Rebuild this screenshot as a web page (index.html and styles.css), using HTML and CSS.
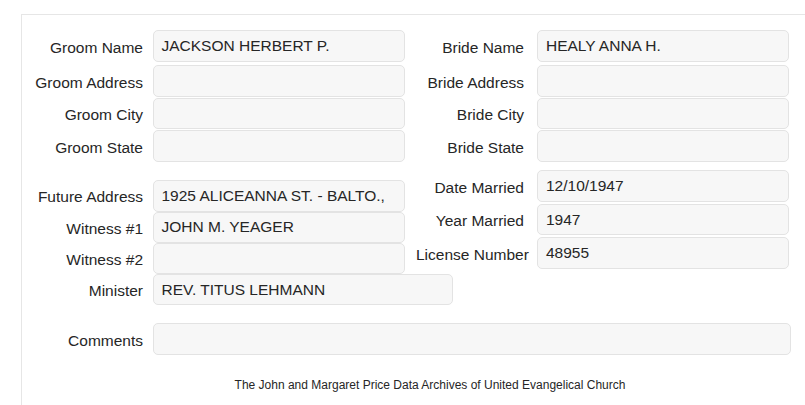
FILE: index.html
```html
<!DOCTYPE html>
<html>
<head>
<meta charset="utf-8">
<link rel="stylesheet" href="styles.css">
</head>
<body>
<div class="panel">
  <div class="section one">
    <div class="col left">
      <div class="field first"><div class="label">Groom Name</div><div class="box">JACKSON HERBERT P.</div></div>
      <div class="field"><div class="label">Groom Address</div><div class="box"></div></div>
      <div class="field"><div class="label">Groom City</div><div class="box"></div></div>
      <div class="field"><div class="label">Groom State</div><div class="box"></div></div>
    </div>
    <div class="col right">
      <div class="field first"><div class="label">Bride Name</div><div class="box">HEALY ANNA H.</div></div>
      <div class="field"><div class="label">Bride Address</div><div class="box"></div></div>
      <div class="field"><div class="label">Bride City</div><div class="box"></div></div>
      <div class="field"><div class="label">Bride State</div><div class="box"></div></div>
    </div>
  </div>
  <div class="section two">
    <div class="col left">
      <div class="field tight"><div class="label">Future Address</div><div class="box">1925 ALICEANNA ST. - BALTO.,</div></div>
      <div class="field tight"><div class="label">Witness #1</div><div class="box">JOHN M. YEAGER</div></div>
      <div class="field tight"><div class="label">Witness #2</div><div class="box"></div></div>
      <div class="field tight"><div class="label">Minister</div><div class="box wide">REV. TITUS LEHMANN</div></div>
    </div>
    <div class="col right">
      <div class="field spaced"><div class="label">Date Married</div><div class="box">12/10/1947</div></div>
      <div class="field spaced"><div class="label">Year Married</div><div class="box">1947</div></div>
      <div class="field spaced"><div class="label">License Number</div><div class="box">48955</div></div>
    </div>
  </div>
  <div class="field comments"><div class="label">Comments</div><div class="box full"></div></div>
  <div class="footer">The John and Margaret Price Data Archives of United Evangelical Church</div>
</div>
</body>
</html>
```
FILE: styles.css
```css
html, body {
  margin: 0;
  padding: 0;
  background: #ffffff;
  overflow: hidden;
}
body {
  font-family: "Liberation Sans", Arial, sans-serif;
  font-size: 15.5px;
  color: #262626;
}
.panel {
  margin: 14px 0 0 21px;
  border-top: 1px solid #e6e6e6;
  border-left: 1px solid #e6e6e6;
  padding-top: 15.3px;
  height: 400px;
  box-sizing: border-box;
}
.section {
  display: flex;
  align-items: flex-start;
}
.col {
  display: flex;
  flex-direction: column;
  flex: 0 0 auto;
}
.col.left {
  width: 382px;
}
.col.right {
  margin-left: 12px;
}
.field {
  display: flex;
  align-items: center;
  height: 31.5px;
  margin-bottom: 1px;
}
.field.first {
  margin-bottom: 3.5px;
}
.label {
  flex: 0 0 auto;
  white-space: nowrap;
  text-align: right;
  padding-top: 3px;
  box-sizing: border-box;
}
.left .label, .comments .label {
  width: 121px;
  margin-right: 9.5px;
}
.right .label {
  width: 108px;
  margin-right: 13px;
}
.box {
  flex: 0 0 auto;
  box-sizing: border-box;
  width: 252px;
  height: 100%;
  background: #f7f7f7;
  border: 1px solid #e3e3e3;
  border-radius: 5px;
  padding: 0 8px;
  display: flex;
  align-items: center;
  white-space: nowrap;
  overflow: hidden;
}
.box.wide {
  width: 300px;
}
.comments .box {
  flex: 0 0 auto;
  width: 638px;
  border-color: #e3e3e3;
}
.section.two {
  margin-top: 7.5px;
}
.two .col.left {
  padding-top: 10px;
}
.field.tight {
  height: 31.3px;
  margin-bottom: 0;
}
.field.spaced {
  height: 31.5px;
  margin-bottom: 2px;
}
.field.comments {
  margin-top: 18px;
  height: 31.3px;
  width: 790px;
}
.footer {
  margin-top: 22.8px;
  font-size: 12px;
  line-height: 14px;
  text-align: center;
  padding-left: 33px;
}
```
